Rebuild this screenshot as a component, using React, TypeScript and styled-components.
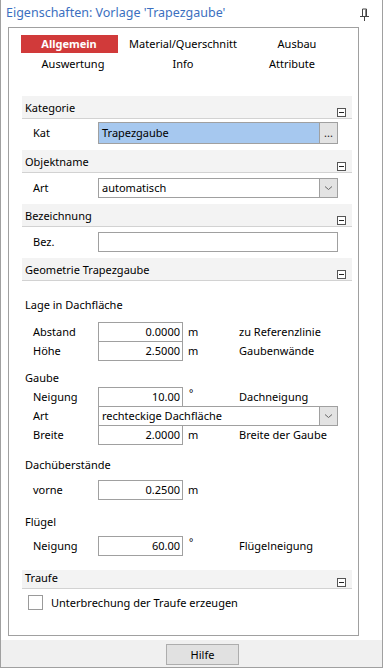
import React from "react";
import styled, { createGlobalStyle } from "styled-components";

const GlobalStyle = createGlobalStyle`
  html, body { margin: 0; padding: 0; background: #fff; }
  body { font-family: "Noto Sans", "Open Sans", sans-serif; font-size: 11px; color: #000; }
  * { box-sizing: border-box; }
`;

const Window = styled.div`
  width: 383px;
  height: 668px;
  border: 1px solid #a0a0a0;
  border-top: none;
  display: flex;
  flex-direction: column;
  background: #fff;
`;

const TitleBar = styled.div`
  height: 27px;
  flex: none;
  display: flex;
  align-items: flex-start;
  justify-content: space-between;
  padding: 4px 13px 0 5px;
`;

const Title = styled.div`
  color: #3b6fc0;
  font-size: 12.5px;
  line-height: 18px;
`;

const PinIcon = styled.svg`
  margin-top: 4px;
`;

const Body = styled.div`
  flex: 1;
  display: flex;
  padding: 0 23px 4px 7px;
  min-height: 0;
`;

const Panel = styled.div`
  flex: 1;
  border: 1px solid #a0a0a0;
  display: flex;
  flex-direction: column;
  overflow: hidden;
`;

const Tabs = styled.div`
  display: grid;
  grid-template-columns: repeat(3, 114px);
  grid-auto-rows: 18px;
  row-gap: 2px;
  padding: 7px 0 0 3px;
`;

const Tab = styled.div<{ $active?: boolean; $shift?: number }>`
  justify-self: center;
  width: 97px;
  height: 18px;
  display: flex;
  align-items: center;
  justify-content: center;
  white-space: nowrap;
  line-height: 16px;
  font-weight: ${(p) => (p.$active ? 700 : 400)};
  color: ${(p) => (p.$active ? "#fff" : "#000")};
  background: ${(p) => (p.$active ? "#d13a3a" : "transparent")};
  transform: translateX(${(p) => p.$shift ?? 0}px);
`;

const Sections = styled.div`
  display: flex;
  flex-direction: column;
  padding: 23px 6px 0 13px;
`;

const HeaderBar = styled.div<{ $compact?: boolean; $gap: number }>`
  margin-top: ${(p) => p.$gap}px;
  height: ${(p) => (p.$compact ? 19 : 23)}px;
  background: #f3f3f3;
  border-bottom: 1px solid #d2d2d2;
  display: flex;
  justify-content: space-between;
  padding: ${(p) => (p.$compact ? 0 : 4)}px 6px 0 3px;
`;

const HeaderText = styled.span`
  line-height: 16px;
`;

const CollapseIcon = styled.svg`
  align-self: flex-end;
  margin-bottom: 1px;
  flex: none;
`;

const Row = styled.div<{ $gap?: number; $h?: number }>`
  margin-top: ${(p) => p.$gap ?? 0}px;
  height: ${(p) => p.$h ?? 20}px;
  display: grid;
  grid-template-columns: 65px 85px 56px 1fr;
  align-items: center;
  padding: 0 14px 0 11px;
`;

const Stack = styled.div<{ $gap: number }>`
  margin-top: ${(p) => p.$gap}px;
  display: flex;
  flex-direction: column;
  & > * + * {
    margin-top: -1px;
  }
`;

const Label = styled.span`
  line-height: 16px;
  white-space: nowrap;
`;

const GroupLabel = styled.div<{ $gap: number }>`
  margin-top: ${(p) => p.$gap}px;
  height: 16px;
  line-height: 16px;
  padding-left: 3px;
`;

const Box = styled.div<{ $fill?: string; $wide?: boolean; $align?: "left" | "right" }>`
  grid-column: ${(p) => (p.$wide ? "2 / -1" : "2 / 3")};
  height: 100%;
  border: 1px solid #a0a0a0;
  background: ${(p) => p.$fill ?? "#fff"};
  display: flex;
  align-items: center;
  justify-content: ${(p) => (p.$align === "right" ? "flex-end" : "flex-start")};
  padding: ${(p) => (p.$align === "right" ? "0 2px 0 0" : "0 0 0 3px")};
  line-height: 16px;
  white-space: nowrap;
  overflow: hidden;
`;

const BoxText = styled.span`
  flex: 1;
`;

const BoxButton = styled.div`
  flex: none;
  width: 18px;
  height: 100%;
  background: #e3e3e3;
  border-left: 1px solid #a0a0a0;
  display: flex;
  align-items: center;
  justify-content: center;
  font-size: 11px;
  line-height: 16px;
  color: #222;
`;

const Unit = styled.span`
  padding-left: 5px;
  line-height: 16px;
`;

const Degree = styled.span`
  padding-left: 6px;
  align-self: start;
  line-height: 12px;
  font-size: 10px;
`;

const CheckRow = styled.label`
  margin-top: 6px;
  display: flex;
  align-items: center;
  gap: 8px;
  padding-left: 6px;
  height: 15px;
`;

const CheckBox = styled.span`
  width: 15px;
  height: 15px;
  border: 1px solid #9a9a9a;
  background: #fff;
  flex: none;
`;

const Footer = styled.div`
  height: 27px;
  flex: none;
  background: #f0f0f0;
  display: flex;
  align-items: flex-start;
  padding: 4px 0 0 165px;
`;

const Button = styled.div`
  width: 73px;
  height: 21px;
  background: #e1e1e1;
  border: 1px solid #adadad;
  display: flex;
  align-items: center;
  justify-content: center;
  line-height: 16px;
`;

const Collapse = () => (
  <CollapseIcon width="9" height="9" viewBox="0 0 9 9">
    <rect x="0.5" y="0.5" width="8" height="8" fill="#fff" stroke="#555" />
    <path d="M2 4.5 H7" stroke="#222" strokeWidth="1" />
  </CollapseIcon>
);

const SectionHeader = ({ title, gap, compact }: { title: string; gap: number; compact?: boolean }) => (
  <HeaderBar $gap={gap} $compact={compact}>
    <HeaderText>{title}</HeaderText>
    <Collapse />
  </HeaderBar>
);

const Chevron = () => (
  <svg width="9" height="6" viewBox="0 0 9 6">
    <path d="M1 1.5 L4.5 4.5 L8 1.5" fill="none" stroke="#666" strokeWidth="1" />
  </svg>
);

const NumberRow = ({
  label,
  value,
  unit,
  note,
  degree,
}: {
  label: string;
  value: string;
  unit?: string;
  note?: string;
  degree?: boolean;
}) => (
  <Row>
    <Label>{label}</Label>
    <Box $align="right">{value}</Box>
    {degree ? <Degree>°</Degree> : <Unit>{unit}</Unit>}
    <Label>{note}</Label>
  </Row>
);

export default function App() {
  return (
    <>
      <GlobalStyle />
      <Window>
        <TitleBar>
          <Title>Eigenschaften: Vorlage 'Trapezgaube'</Title>
          <PinIcon width="9" height="13" viewBox="0 0 9 13">
            <path d="M2.5 1 H6.5 M2.5 1 V8 M6.5 1 V8 M0 8.5 H9 M4.5 9 V13" fill="none" stroke="#444" strokeWidth="1" />
            <path d="M5.5 1 V8" stroke="#888" strokeWidth="1" />
          </PinIcon>
        </TitleBar>
        <Body>
          <Panel>
            <Tabs>
              <Tab $active>Allgemein</Tab>
              <Tab>Material/Querschnitt</Tab>
              <Tab>Ausbau</Tab>
              <Tab $shift={4}>Auswertung</Tab>
              <Tab>Info</Tab>
              <Tab $shift={-5}>Attribute</Tab>
            </Tabs>
            <Sections>
              <SectionHeader title="Kategorie" gap={0} />
              <Row $gap={3} $h={22}>
                <Label>Kat</Label>
                <Box $wide $fill="#a6c8ef" style={{ paddingRight: 0 }}>
                  <BoxText>Trapezgaube</BoxText>
                  <BoxButton>...</BoxButton>
                </Box>
              </Row>

              <SectionHeader title="Objektname" gap={6} />
              <Row $gap={5}>
                <Label>Art</Label>
                <Box $wide>
                  <BoxText>automatisch</BoxText>
                  <BoxButton>
                    <Chevron />
                  </BoxButton>
                </Box>
              </Row>

              <SectionHeader title="Bezeichnung" gap={6} />
              <Row $gap={5}>
                <Label>Bez.</Label>
                <Box $wide />
              </Row>

              <SectionHeader title="Geometrie Trapezgaube" gap={6} />
              <GroupLabel $gap={16}>Lage in Dachfläche</GroupLabel>
              <Stack $gap={9}>
                <NumberRow label="Abstand" value="0.0000" unit="m" note="zu Referenzlinie" />
                <NumberRow label="Höhe" value="2.5000" unit="m" note="Gaubenwände" />
              </Stack>

              <GroupLabel $gap={9}>Gaube</GroupLabel>
              <Stack $gap={1}>
                <NumberRow label="Neigung" value="10.00" degree note="Dachneigung" />
                <Row>
                  <Label>Art</Label>
                  <Box $wide>
                    <BoxText>rechteckige Dachfläche</BoxText>
                    <BoxButton>
                      <Chevron />
                    </BoxButton>
                  </Box>
                </Row>
                <NumberRow label="Breite" value="2.0000" unit="m" note="Breite der Gaube" />
              </Stack>

              <GroupLabel $gap={12}>Dachüberstände</GroupLabel>
              <Stack $gap={7}>
                <NumberRow label="vorne" value="0.2500" unit="m" />
              </Stack>

              <GroupLabel $gap={14}>Flügel</GroupLabel>
              <Stack $gap={6}>
                <NumberRow label="Neigung" value="60.00" degree note="Flügelneigung" />
              </Stack>

              <SectionHeader title="Traufe" gap={14} compact />
              <CheckRow>
                <CheckBox />
                <Label>Unterbrechung der Traufe erzeugen</Label>
              </CheckRow>
            </Sections>
          </Panel>
        </Body>
        <Footer>
          <Button>Hilfe</Button>
        </Footer>
      </Window>
    </>
  );
}
